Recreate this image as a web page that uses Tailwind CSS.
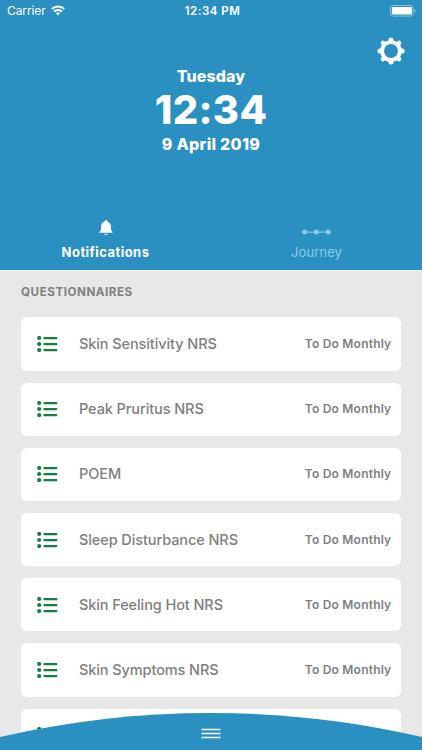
<!DOCTYPE html>
<html lang="en">
<head>
    <meta charset="UTF-8">
    <meta name="viewport" content="width=device-width, initial-scale=1.0">
    <title>Notifications</title>
    <script src="https://cdn.jsdelivr.net/npm/@tailwindcss/browser@4"></script>
</head>
<body class="relative h-[750px] w-[422px] overflow-hidden bg-[#e8e8e8] font-['Inter',sans-serif]">

    <!-- Header -->
    <header class="relative flex h-[270px] flex-col bg-[#2990c1] text-white">
        <div class="grid h-[22px] grid-cols-3 items-center pl-[7px] pr-[6px] text-[12px]">
            <div class="flex items-center gap-[5px]">
                <span class="tracking-[-0.1px]">Carrier</span>
                <svg class="-mt-px h-[11px] w-[14px]" viewBox="0 0 14 11" fill="none" stroke="currentColor" stroke-width="2.1">
                    <path d="M.8 4.1a8.8 8.8 0 0 1 12.4 0M3.1 6.6a5.5 5.5 0 0 1 7.8 0" />
                    <path d="M7 10.4 4.9 8.3a3 3 0 0 1 4.2 0z" fill="currentColor" stroke="none" />
                </svg>
            </div>
            <span class="pl-[2px] pt-[2px] text-center text-[11.5px] font-semibold tracking-[0.5px]">12:34 PM</span>
            <svg class="-mt-px h-3 w-[27px] justify-self-end" viewBox="0 0 27 12" fill="none">
                <rect x="1.4" y=".5" width="22.8" height="10.6" rx="2.8" stroke="#fff" stroke-opacity=".45" />
                <rect x="2.9" y="2" width="20" height="7.6" rx="1.4" fill="#fff" />
                <path d="M25.4 4.2c1.6.4 1.6 2.9 0 3.3z" fill="#fff" fill-opacity=".45" />
            </svg>
        </div>

        <button class="absolute left-[377px] top-[37px] h-7 w-7" aria-label="Settings">
            <svg viewBox="-14 -14 28 28" fill="none" stroke="currentColor">
                <circle r="8.9" stroke-width="3.9" />
                <g stroke-width="5" stroke-linecap="round">
                    <path d="M0-11v-.1M0 11v.1M-11 0h-.1M11 0h.1" />
                    <path d="m7.9-7.9.1-.1M7.9 7.9l.1.1M-7.9-7.9l-.1-.1M-7.9 7.9l-.1.1" stroke-width="4.6" />
                </g>
            </svg>
        </button>

        <div class="flex flex-col items-center pt-[42px] font-extrabold">
            <span class="h-6 text-[16px] leading-6 tracking-[0.1px]">Tuesday</span>
            <span class="h-11 text-[40px] leading-11 tracking-[0.3px]">12:34</span>
            <span class="h-6 text-[16px] leading-6 tracking-[0.3px]">9 April 2019</span>
        </div>

        <!-- Tabs -->
        <nav class="mt-auto grid h-[50px] grid-cols-2 text-[13px]">
            <div class="flex flex-col items-center font-bold">
                <svg class="h-4 w-[14px]" viewBox="0 0 14 16" fill="currentColor">
                    <path d="M7 .3c.8 0 1.3.5 1.4 1.2 2.2.6 3.4 2.3 3.4 4.6 0 3.4.4 4.6 1.8 5.9v.8H.4V12c1.4-1.3 1.8-2.500 1.8-5.900 0-2.300 1.200-4 3.400-4.600C5.700.8 6.200.3 7 .3z" />
                    <path d="M5 13.800h4c-.3.900-1 1.300-2 1.300s-1.700-.4-2-1.300z" fill-opacity=".8" />
                </svg>
                <span class="mt-[6px] leading-5 tracking-[0.45px]">Notifications</span>
            </div>
            <div class="flex flex-col items-center text-[#8dcbe9]">
                <svg class="mt-1 h-4 w-[30px]" viewBox="0 0 30 16" fill="currentColor">
                    <path d="M3 7.500h24v1.200H3z" />
                    <circle cx="2.600" cy="8.100" r="2.500" />
                    <circle cx="14.400" cy="8.100" r="2.500" />
                    <circle cx="26.200" cy="8.100" r="2.500" />
                </svg>
                <span class="mt-[2px] leading-5 tracking-[0.1px]">Journey</span>
            </div>
        </nav>
    </header>

    <!-- Questionnaires -->
    <main class="border-t border-[#f2f6f8] px-[21px] text-[#808080]">
        <h2 class="mt-[11px] text-[11.7px] font-bold leading-5 tracking-[0.5px]">QUESTIONNAIRES</h2>
        <ul id="questionnaires" class="mt-[15.4px] flex w-[380.4px] flex-col gap-[12px]"></ul>
    </main>

    <template id="card">
        <li class="flex h-[53.2px] shrink-0 items-center rounded-md bg-white pl-[15.6px] pr-[10px]">
            <svg class="h-4 w-[21px] text-[#128040]" viewBox="0 0 21 16" fill="currentColor">
                <circle cx="2.2" cy="2" r="2.1" /><rect x="6.4" y=".9" width="14" height="2.3" rx="1" />
                <circle cx="2.2" cy="8" r="2.1" /><rect x="6.4" y="6.9" width="14" height="2.3" rx="1" />
                <circle cx="2.2" cy="14" r="2.1" /><rect x="6.4" y="12.9" width="14" height="2.3" rx="1" />
            </svg>
            <span class="name ml-[21.4px] text-[14.5px] font-medium tracking-[-0.09px]"></span>
            <span class="ml-auto text-[12px] font-semibold tracking-[0.2px]">To Do Monthly</span>
        </li>
    </template>

    <!-- Bottom drawer -->
    <footer class="absolute bottom-0 left-0 h-10 w-full">
        <svg class="h-10 w-[422px]" viewBox="0 0 422 40">
            <path d="M0 27A940 940 0 0 1 422 27V40H0z" fill="#2990c1" />
            <path d="M201.5 19.5h19M201.5 23.5h19M201.5 27.5h19" stroke="#fff" stroke-width="1.5" />
        </svg>
    </footer>

    <script>
        const names = [
            'Skin Sensitivity NRS',
            'Peak Pruritus NRS',
            'POEM',
            'Sleep Disturbance NRS',
            'Skin Feeling Hot NRS',
            'Skin Symptoms NRS',
            ''
        ];
        const list = document.getElementById('questionnaires');
        const card = document.getElementById('card');
        names.forEach(name => {
            const item = card.content.cloneNode(true);
            item.querySelector('.name').textContent = name;
            list.appendChild(item);
        });
    </script>
</body>
</html>
